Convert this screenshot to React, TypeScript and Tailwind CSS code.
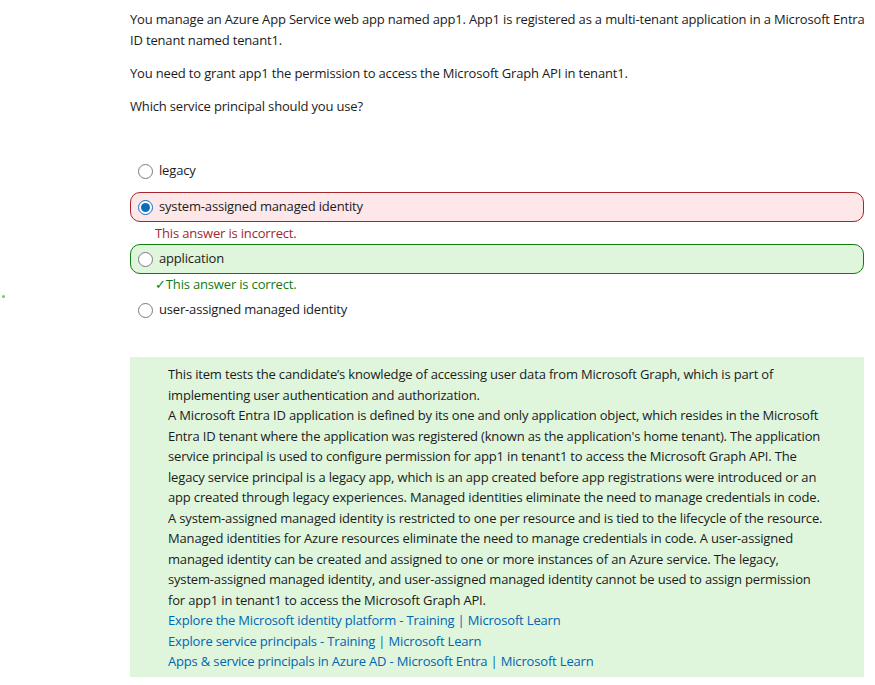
import React from "react";

const intro = [
  "You manage an Azure App Service web app named app1. App1 is registered as a multi-tenant application in a Microsoft Entra",
  "ID tenant named tenant1.",
];

const explanation = [
  "This item tests the candidate’s knowledge of accessing user data from Microsoft Graph, which is part of",
  "implementing user authentication and authorization.",
  "A Microsoft Entra ID application is defined by its one and only application object, which resides in the Microsoft",
  "Entra ID tenant where the application was registered (known as the application's home tenant). The application",
  "service principal is used to configure permission for app1 in tenant1 to access the Microsoft Graph API. The",
  "legacy service principal is a legacy app, which is an app created before app registrations were introduced or an",
  "app created through legacy experiences. Managed identities eliminate the need to manage credentials in code.",
  "A system-assigned managed identity is restricted to one per resource and is tied to the lifecycle of the resource.",
  "Managed identities for Azure resources eliminate the need to manage credentials in code. A user-assigned",
  "managed identity can be created and assigned to one or more instances of an Azure service. The legacy,",
  "system-assigned managed identity, and user-assigned managed identity cannot be used to assign permission",
  "for app1 in tenant1 to access the Microsoft Graph API.",
];

const links = [
  "Explore the Microsoft identity platform - Training | Microsoft Learn",
  "Explore service principals - Training | Microsoft Learn",
  "Apps & service principals in Azure AD - Microsoft Entra | Microsoft Learn",
];

const Radio: React.FC<{ checked?: boolean }> = ({ checked }) =>
  checked ? (
    <span className="flex h-[15px] w-[15px] shrink-0 items-center justify-center rounded-full border border-[#0f6cbd] bg-white">
      <span className="h-[9px] w-[9px] rounded-full bg-[#0f6cbd]" />
    </span>
  ) : (
    <span className="h-[15px] w-[15px] shrink-0 rounded-full border border-[#7a7a7a] bg-white" />
  );

const Option: React.FC<{ label: string; checked?: boolean; state?: "wrong" | "right" }> = ({
  label,
  checked,
  state,
}) => {
  const box =
    state === "wrong"
      ? "border-[#a4262c] bg-[#fde7e9]"
      : state === "right"
      ? "border-[#107c10] bg-[#dff6dd]"
      : "border-transparent";
  return (
    <div className={`flex h-[30px] items-center gap-[6px] rounded-[10px] border pl-[7px] ${box}`}>
      <Radio checked={checked} />
      <span>{label}</span>
    </div>
  );
};

export default function App() {
  return (
    <div
      className="relative min-h-[685px] w-[875px] bg-white text-[13px] tracking-[-0.17px] text-[#1b1b1b]"
      style={{ fontFamily: '"Segoe UI", "Open Sans", sans-serif' }}
    >
      <span className="absolute left-[2px] top-[295px] h-[3px] w-[3px] rounded-full bg-[#7ac943]" />
      <div className="ml-[130px] w-[734px] pt-[9px]">
        <div className="leading-[21px]">
          {intro.map((l) => (
            <div key={l} className="whitespace-nowrap">
              {l}
            </div>
          ))}
        </div>
        <p className="mt-[12px] leading-[21px]">
          You need to grant app1 the permission to access the Microsoft Graph API in tenant1.
        </p>
        <p className="mt-[12px] leading-[21px]">Which service principal should you use?</p>

        <div className="mt-[39px] flex flex-col">
          <Option label="legacy" />
          <div className="mt-[6px]">
            <Option label="system-assigned managed identity" checked state="wrong" />
          </div>
          <div className="flex h-[22px] items-center pl-[25px] pt-[1px] text-[#a4262c]">This answer is incorrect.</div>
          <Option label="application" state="right" />
          <div className="flex h-[21px] items-center pl-[25px] text-[#107c10]">
            <span>✓</span>This answer is correct.
          </div>
          <Option label="user-assigned managed identity" />
        </div>

        <div className="mt-[32px] bg-[#dff6dd] pb-[5px] pl-[38px] pt-[7px] leading-[20.5px]">
          {explanation.map((l) => (
            <div key={l} className="whitespace-nowrap">
              {l}
            </div>
          ))}
          {links.map((l) => (
            <div key={l} className="whitespace-nowrap">
              <a href="#" className="text-[#0065b3]">
                {l}
              </a>
            </div>
          ))}
        </div>
      </div>
    </div>
  );
}
